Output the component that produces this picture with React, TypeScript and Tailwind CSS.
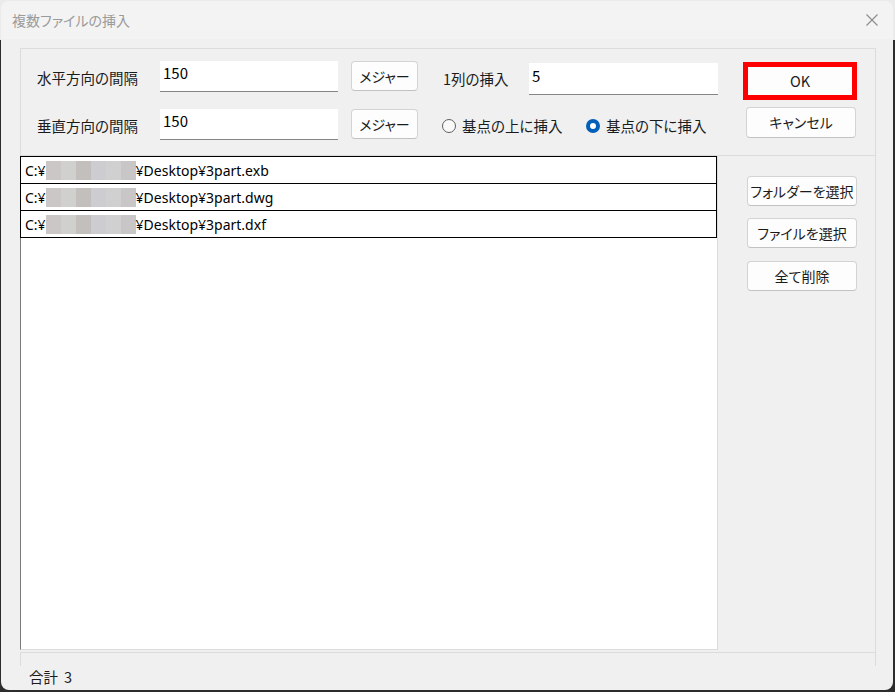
import React from 'react';

const files = ['3part.exb', '3part.dwg', '3part.dxf'];
const blurTiles = ['#cbc7c7', '#d0d0cf', '#c3bfbc', '#cdccd1', '#d0d0d1', '#c9c6c7'];

const Btn: React.FC<{ children: React.ReactNode; className?: string }> = ({ children, className = '' }) => (
  <div
    className={`flex items-center justify-center whitespace-nowrap rounded-[4px] border border-[#d3d3d3] border-b-[#c2c2c2] bg-[#fdfdfd] text-[14px] text-[#1b1b1b] ${className}`}
  >
    {children}
  </div>
);

const Input: React.FC<{ value: string; className?: string }> = ({ value, className = '' }) => (
  <div className={`bg-white border-b border-[#868686] pl-[3px] pt-[2px] text-[15px] leading-[20px] text-black ${className}`}>
    {value}
  </div>
);

const Label: React.FC<{ children: React.ReactNode; className?: string }> = ({ children, className = '' }) => (
  <div className={`flex h-[31px] items-center pt-[3px] text-[14.5px] text-[#1b1b1b] whitespace-nowrap ${className}`}>{children}</div>
);

export default function App() {
  return (
    <div className="w-[895px] h-[692px] bg-[linear-gradient(#ebebeb_0_40px,#2c2c2c_40px)] pt-[1px] pl-[1px] font-['Noto_Sans_CJK_JP',sans-serif] [font-feature-settings:'palt']">
      <div className="w-[892px] h-[689px] rounded-[8px] overflow-hidden bg-[#f0f0f0] flex flex-col">
        {/* Title bar */}
        <div className="h-[38px] bg-[#f3f3f3] flex items-center justify-between pl-[11px] pr-[15px]">
          <span className="text-[14px] text-[#9a9a9a]">複数ファイルの挿入</span>
          <svg width="12" height="12" viewBox="0 0 12 12">
            <path d="M0.5 0.5 L11.5 11.5 M11.5 0.5 L0.5 11.5" stroke="#8c8c8c" strokeWidth="1.1" />
          </svg>
        </div>

        {/* Body panel */}
        <div className="ml-[19px] mt-[9px] w-[856px]">
          {/* Top section */}
          <div className="h-[108px] border border-[#dcdcdc] flex">
            <div className="pl-[16px] pt-[12px] w-[697px]">
              <div className="flex items-start h-[34px]">
                <Label className="w-[123px]">水平方向の間隔</Label>
                <Input value="150" className="w-[178px] h-[31px]" />
                <Btn className="ml-[13px] w-[67px] h-[30px]">メジャー</Btn>
                <Label className="ml-[25px] w-[86px] pt-[5px]">1列の挿入</Label>
                <Input value="5" className="mt-[2px] w-[189px] h-[32px] pt-[3px]" />
              </div>
              <div className="flex items-start mt-[14px]">
                <Label className="w-[123px]">垂直方向の間隔</Label>
                <Input value="150" className="w-[178px] h-[31px]" />
                <Btn className="ml-[13px] w-[67px] h-[30px]">メジャー</Btn>
                <div className="ml-[24px] flex items-center h-[31px] pt-[3px]">
                  <div className="flex items-center w-[144px]">
                    <span className="w-[14px] h-[14px] rounded-full border border-[#5f5f5f] bg-[#f9f9f9]" />
                    <span className="ml-[6px] text-[14.5px] text-[#1b1b1b]">基点の上に挿入</span>
                  </div>
                  <div className="flex items-center">
                    <span className="w-[14px] h-[14px] rounded-full bg-[#005fb8] flex items-center justify-center">
                      <span className="w-[6px] h-[6px] rounded-full bg-white" />
                    </span>
                    <span className="ml-[6px] text-[14.5px] text-[#1b1b1b]">基点の下に挿入</span>
                  </div>
                </div>
              </div>
            </div>
            <div className="ml-[25px] pt-[13px]">
              <div className="w-[114px] h-[38px] border-[5px] border-[#ff0000] bg-[#fdfdfd] flex items-center justify-center text-[14.5px] text-[#1b1b1b]">
                OK
              </div>
              <Btn className="ml-[3px] mt-[7px] w-[110px] h-[31px]">キャンセル</Btn>
            </div>
          </div>

          {/* Middle section */}
          <div className="flex h-[496px]">
            <div className="w-[698px] h-[494px] bg-white border-l border-l-[#7a7a7a] border-r border-r-[#dcdcdc] border-b border-b-[#dcdcdc]">
              {files.map((f, i) => (
                <div
                  key={f}
                  className={`-ml-[1px] w-[697px] border-x border-b border-black ${i === 0 ? 'border-t h-[28px]' : 'h-[27px]'} flex items-center pl-[4px] text-[14px] text-black font-['Noto_Sans','Noto_Sans_CJK_JP',sans-serif]`}
                >
                  <span>C:¥</span>
                  <span className="flex h-[19px] mt-[1px]">
                    {blurTiles.map((c, j) => (
                      <span key={j} className="w-[15px] h-[19px]" style={{ backgroundColor: c }} />
                    ))}
                  </span>
                  <span>¥Desktop¥{f}</span>
                </div>
              ))}
            </div>
            <div className="flex-1 border-r border-[#dcdcdc] pl-[29px] pt-[20px]">
              <Btn className="w-[110px] h-[30px]">フォルダーを選択</Btn>
              <Btn className="mt-[12px] w-[110px] h-[30px]">ファイルを選択</Btn>
              <Btn className="mt-[13px] w-[110px] h-[30px]">全て削除</Btn>
            </div>
          </div>

          {/* Bottom strip */}
          <div className="h-[14px] border-x border-t border-[#dcdcdc]" />
        </div>

        {/* Status bar */}
        <div className="pl-[28px] h-[22px] flex items-center gap-[6px] text-[14.5px] text-[#1b1b1b]">
          <span>合計</span>
          <span>3</span>
        </div>
      </div>
    </div>
  );
}
